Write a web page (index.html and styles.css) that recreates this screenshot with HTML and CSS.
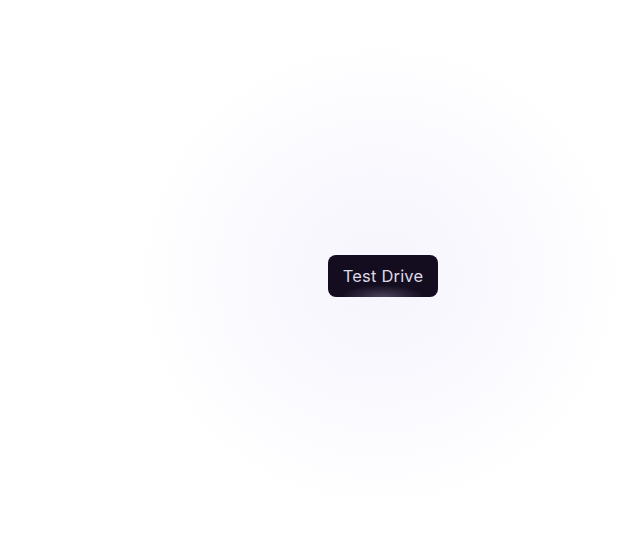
FILE: index.html
```html
<!DOCTYPE html>
<html lang="en">
  <head>
    <meta charset="UTF-8" />
    <meta name="viewport" content="width=device-width, initial-scale=1.0" />
    <title>Test Drive</title>
    <link rel="stylesheet" href="styles.css">
  </head>

  <body>
    <div class="stage">
      <!-- Botón principal con halo -->
      <button class="drive-btn" type="button">Test Drive</button>
    </div>
  </body>
</html>
```

FILE: styles.css
```css
body {
  margin: 0;
  height: 100vh;
  background: #ffffff;
  font-family: Inter, "Noto Sans", sans-serif;
}

.stage {
  height: 100%;
  display: flex;
  justify-content: center;
  align-items: center;
  padding-left: 141px;
  box-sizing: border-box;
  background: radial-gradient(
    ellipse 245px 235px at 380px 276px,
    #f6f5fd 0%,
    #f9f8fe 40%,
    #fcfcff 72%,
    #ffffff 100%
  );
}

.drive-btn {
  width: 110px;
  height: 42px;
  border: none;
  border-radius: 8px;
  padding: 0;
  background:
    radial-gradient(ellipse 42px 12px at 50% 100%, rgba(120, 110, 140, 0.55), rgba(19, 13, 31, 0) 100%),
    #130d1f;
  color: #dcd8e6;
  font-family: Inter, "Noto Sans", sans-serif;
  font-size: 16.5px;
  letter-spacing: 0.2px;
  cursor: pointer;
}
```
